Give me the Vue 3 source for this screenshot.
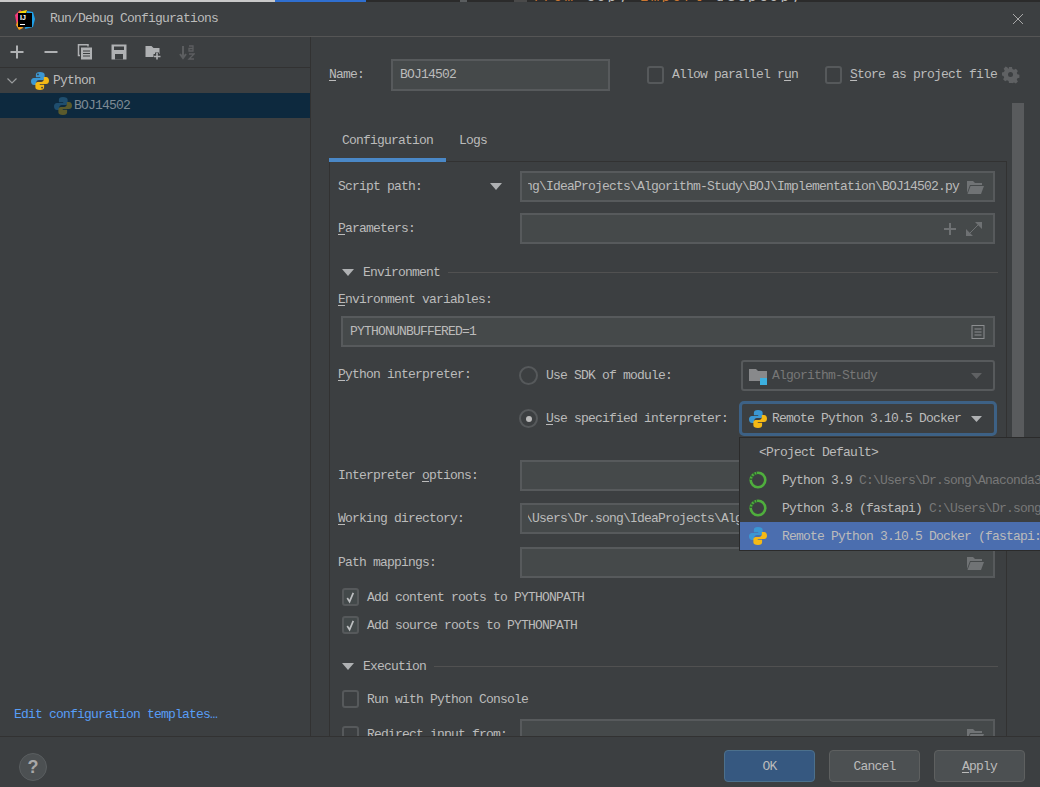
<script setup>
const tools = ['plus', 'minus', 'copy', 'save', 'folder', 'sort']
</script>

<template>
  <div class="dialog">
    <div class="strip">
      <div class="strip-light"></div>
      <div class="strip-blue"></div>
      <i class="strip-gap-a"></i>
      <i class="strip-tab-a"></i>
      <i class="strip-gap-b"></i>
      <i class="strip-tab-b"></i>
      <div class="strip-code"><span class="kw">from</span> copy <span class="kw">import</span> deepcopy</div>
    </div>
    <header class="title">
      <svg class="ij" width="20" height="20" viewBox="0 0 20 20">
        <path d="M0 5 L5 0 L9 3 L3 12 L2 16 Z" fill="#f5387a" />
        <path d="M1 15 L4 8 L8 18 L4 20 Z" fill="#f9a11b" />
        <path d="M3 2 L12 0 L10 6 Z" fill="#f5d90a" />
        <path d="M12 1 L18 2 L20 9 L18 17 L10 19 Z" fill="#1f9fe6" />
        <rect x="3" y="3" width="14" height="14" fill="#000" />
        <rect x="5" y="14" width="5" height="1" fill="#fff" />
        <text x="5" y="10" class="ij-text">IJ</text>
      </svg>
      <span class="title-text">Run/Debug Configurations</span>
      <svg class="close" width="12" height="12" viewBox="0 0 12 12"><path d="M1 1 L11 11 M11 1 L1 11" stroke="#a8a8a8" stroke-width="1" fill="none" /></svg>
    </header>
    <div class="body">
      <aside class="side">
        <div class="toolbar">
          <span v-for="t in tools" :key="t" class="tool">
            <svg width="16" height="16" viewBox="0 0 16 16">
              <path v-if="t === 'plus'" d="M1.5 8 H14.5 M8 1.5 V14.5" stroke="#afb1b3" stroke-width="2" fill="none" />
              <path v-else-if="t === 'minus'" d="M1.5 8 H14.5" stroke="#afb1b3" stroke-width="2" fill="none" />
              <g v-else-if="t === 'copy'" fill="none" stroke="#afb1b3">
                <path d="M3 11.5 H1.5 V0.8 H11 V2.5" stroke-width="1.5" />
                <rect x="4" y="3.5" width="11" height="12" fill="#afb1b3" stroke="none" />
                <path d="M6 7 H13 M6 9.5 H13 M6 12 H13" stroke="#3c3f41" stroke-width="1" />
              </g>
              <g v-else-if="t === 'save'">
                <path d="M0.5 0.5 H15.5 V15.5 H0.5 Z" fill="#afb1b3" />
                <rect x="3" y="2.5" width="10" height="3.5" fill="#3c3f41" />
                <rect x="4" y="10" width="8" height="5.5" fill="#3c3f41" />
              </g>
              <g v-else-if="t === 'folder'">
                <path d="M0.5 2 H6.5 L8.5 4 H14.5 V13 H0.5 Z" fill="#afb1b3" />
                <path d="M12 8.5 V15.5 M8.5 12 H15.5" stroke="#3c3f41" stroke-width="4" />
                <path d="M12 9 V15.5 M9 12.5 H15.5" stroke="#afb1b3" stroke-width="1.6" />
              </g>
              <g v-else fill="none" stroke="#5c5e60">
                <path d="M4 2 V13 M1 10 L4 14 L7 10" stroke-width="2" />
                <path d="M10 2 H14 V7 H10 V4.5 H14 M10 10 H15 L10 15 H15" stroke-width="1.3" />
              </g>
            </svg>
          </span>
        </div>
        <div class="tree-row">
          <svg class="chev" width="10" height="6" viewBox="0 0 10 6"><path d="M0.5 0.5 L5 5 L9.5 0.5" stroke="#9a9c9e" stroke-width="1.2" fill="none" /></svg>
          <svg class="py" width="18" height="18" viewBox="1 1 14 14">
            <path d="M8 1C5.6 1 4.8 1.9 4.8 3.100V5H8.200V5.600H3.300C1.900 5.600 1 6.700 1 8.200c0 1.600.9 2.900 2.300 2.900H5V9.300c0-1.200 1-2.100 2.200-2.100h2.600c1 0 1.800-.8 1.800-1.800V3.100C11.600 1.800 10.300 1 8 1z" fill="#3b97d3" />
            <path d="M8 15c2.400 0 3.200-.9 3.200-2.100V11H7.800v-.6h4.900c1.400 0 2.300-1.100 2.300-2.600 0-1.600-.9-2.900-2.300-2.900H11v1.800c0 1.200-1 2.100-2.200 2.100H6.200c-1 0-1.800.8-1.800 1.800v2.300C4.400 14.200 5.700 15 8 15z" fill="#f5b915" />
            <circle cx="6.400" cy="2.900" r=".7" fill="#3c3f41" /><circle cx="9.600" cy="13.100" r=".7" fill="#3c3f41" />
          </svg>
          <span>Python</span>
        </div>
        <div class="tree-row selected">
          <svg class="py-child" width="18" height="18" viewBox="1 1 14 14">
            <path d="M8 1C5.6 1 4.8 1.9 4.8 3.100V5H8.200V5.600H3.300C1.900 5.600 1 6.700 1 8.200c0 1.600.9 2.900 2.300 2.900H5V9.300c0-1.200 1-2.100 2.200-2.100h2.600c1 0 1.800-.8 1.800-1.800V3.100C11.600 1.800 10.300 1 8 1z" fill="#1f4e6e" />
            <path d="M8 15c2.400 0 3.200-.9 3.200-2.100V11H7.800v-.6h4.900c1.400 0 2.300-1.100 2.300-2.600 0-1.600-.9-2.900-2.300-2.900H11v1.800c0 1.200-1 2.100-2.200 2.100H6.200c-1 0-1.800.8-1.800 1.800v2.300C4.400 14.200 5.700 15 8 15z" fill="#5a5a2c" />
          </svg>
          <span>BOJ14502</span>
        </div>
        <a class="templates">Edit configuration templates…</a>
      </aside>
      <main class="main">
        <div class="name-row">
          <label class="name-label"><u>N</u>ame:</label>
          <div class="input name-input">BOJ14502</div>
          <span class="check-box first"></span><span class="check-text">Allow parallel r<u>u</u>n</span>
          <span class="check-box second"></span><span class="check-text"><u>S</u>tore as project file</span>
          <svg class="gear" width="18" height="18" viewBox="0 0 18 18">
            <path d="M7 1h3l.4 2 1.6.8 1.900-1 2 2.100-1.100 1.800.6 1.500 2 .5v3l-2 .5-.6 1.500 1.100 1.700-2 2.100-1.900-1-1.600.7L10 17H7l-.4-2-1.600-.7-1.800 1-2.100-2.100 1.100-1.700-.7-1.500L0 9.500v-3l2-.5.7-1.500-1.100-1.800 2.100-2.100 1.800 1L6.600 3z" fill="#5f6163" />
            <circle cx="8.500" cy="8.500" r="2.500" fill="#3c3f41" />
          </svg>
        </div>
        <div class="tabs">
          <span class="tab active">Configuration</span>
          <span class="tab">Logs</span>
        </div>
        <section class="panel">
          <div class="row r-script">
            <span class="label">Script path:</span>
            <svg class="combo-arrow" width="12" height="7" viewBox="0 0 12 7"><path d="M0 0H12L6 7Z" fill="#afb1b3" /></svg>
            <div class="input field path">
              <div class="path-clip"><span class="path-text">C:\Users\Dr.song\IdeaProjects\Algorithm-Study\BOJ\Implementation\BOJ14502.py</span></div>
              <svg class="folder-ic" width="18" height="14" viewBox="0 0 18 14"><path d="M1 1H7L9 3H16V5H4L1 13Z" fill="#707375" /><path d="M4.500 6H18L15 14H1.500Z" fill="#707375" /></svg>
            </div>
          </div>
          <div class="row r-params">
            <span class="label"><u>P</u>arameters:</span>
            <div class="input field end">
              <svg width="40" height="16" viewBox="4 0 40 16">
                <path d="M4 8H16M10 2V14" stroke="#6e7173" stroke-width="2" fill="none" />
                <path d="M27 15L40 2" stroke="#6e7173" stroke-width="1" fill="none" />
                <path d="M35 1H42V8ZM26 8V15H33Z" fill="#6e7173" />
              </svg>
            </div>
          </div>
          <div class="section s-env">
            <svg width="12" height="7" viewBox="0 0 12 7"><path d="M0 0H12L6 7Z" fill="#afb1b3" /></svg>
            <span>Environment</span>
            <i class="rule"></i>
          </div>
          <div class="plain r-envl"><u>E</u>nvironment variables:</div>
          <div class="input env-input">
            <span>PYTHONUNBUFFERED=1</span>
            <svg width="14" height="14" viewBox="0 0 14 14"><rect x="1" y="0.500" width="12" height="13" fill="none" stroke="#8c8e90" /><path d="M3.500 4H10.500M3.500 7H10.500M3.500 10H10.500" stroke="#8c8e90" /></svg>
          </div>
          <div class="row r-sdk">
            <span class="label py-label"><u>P</u>ython interpreter:</span>
            <span class="radio"></span><span class="radio-text sdk">Use SDK of module:</span>
            <div class="combo disabled">
              <svg width="18" height="18" viewBox="0 0 18 18"><path d="M0 2H7L9 4H18V14H0Z" fill="#88898b" /><rect x="11" y="11" width="7" height="7" fill="#3cb0e0" /></svg>
              <span>Algorithm-Study</span>
              <svg class="push" width="11" height="6" viewBox="0 0 11 6"><path d="M0 0H11L5.500 6Z" fill="#5f6163" /></svg>
            </div>
          </div>
          <div class="row r-spec">
            <span class="label"></span>
            <span class="radio on"><i></i></span><span class="radio-text spec"><u>U</u>se specified interpreter:</span>
            <div class="combo focus">
              <svg width="18" height="18" viewBox="1 1 14 14">
                <path d="M8 1C5.600 1 4.800 1.900 4.800 3.100V5H8.200V5.600H3.300C1.900 5.600 1 6.700 1 8.200c0 1.600.9 2.900 2.300 2.900H5V9.300c0-1.200 1-2.100 2.200-2.100h2.600c1 0 1.800-.8 1.800-1.800V3.100C11.600 1.800 10.300 1 8 1z" fill="#3b97d3" />
                <path d="M8 15c2.400 0 3.200-.9 3.200-2.100V11H7.800v-.6h4.900c1.400 0 2.300-1.100 2.300-2.600 0-1.600-.9-2.900-2.300-2.900H11v1.800c0 1.200-1 2.100-2.200 2.100H6.200c-1 0-1.800.8-1.800 1.800v2.300C4.400 14.200 5.700 15 8 15z" fill="#f5b915" />
              </svg>
              <span>Remote Python 3.10.5 Docker</span>
              <svg class="push" width="11" height="6" viewBox="0 0 11 6"><path d="M0 0H11L5.500 6Z" fill="#afb1b3" /></svg>
            </div>
          </div>
          <div class="row r-opts">
            <span class="label">Interpreter <u>o</u>ptions:</span>
            <div class="input field"></div>
          </div>
          <div class="row r-work">
            <span class="label"><u>W</u>orking directory:</span>
            <div class="input field path">
              <div class="path-clip"><span class="path-text">C:\Users\Dr.song\IdeaProjects\Algorithm-Study\BOJ\Implementation</span></div>
            </div>
          </div>
          <div class="row r-map">
            <span class="label">Path mappings:</span>
            <div class="input field end">
              <svg width="18" height="14" viewBox="0 0 18 14"><path d="M1 1H7L9 3H16V5H4L1 13Z" fill="#707375" /><path d="M4.500 6H18L15 14H1.500Z" fill="#707375" /></svg>
            </div>
          </div>
          <div class="check-row c1">
            <span class="check-box on"><svg width="13" height="13" viewBox="0 0 14 14"><path d="M3.500 7.500L6 11.500L10 2" stroke="#bdbfc1" stroke-width="1.800" fill="none" /></svg></span>
            <span class="check-label">Add content roots to PYTHONPATH</span>
          </div>
          <div class="check-row c2">
            <span class="check-box on"><svg width="13" height="13" viewBox="0 0 14 14"><path d="M3.500 7.500L6 11.500L10 2" stroke="#bdbfc1" stroke-width="1.800" fill="none" /></svg></span>
            <span class="check-label">Add source roots to PYTHONPATH</span>
          </div>
          <div class="section s-exec">
            <svg width="12" height="7" viewBox="0 0 12 7"><path d="M0 0H12L6 7Z" fill="#afb1b3" /></svg>
            <span>Execution</span>
            <i class="rule"></i>
          </div>
          <div class="check-row c3">
            <span class="check-box"></span>
            <span class="check-label">Run with Python Console</span>
          </div>
          <div class="row r-redir">
            <span class="label redir"><span class="check-box"></span><span>Redirect input from:</span></span>
            <div class="input field end">
              <svg width="18" height="14" viewBox="0 0 18 14"><path d="M1 1H7L9 3H16V5H4L1 13Z" fill="#707375" /><path d="M4.500 6H18L15 14H1.500Z" fill="#707375" /></svg>
            </div>
          </div>
        </section>
      </main>
    </div>
    <footer class="footer">
      <span class="help">?</span>
      <span class="btn primary">OK</span>
      <span class="btn">Cancel</span>
      <span class="btn"><u>A</u>pply</span>
    </footer>

    <div class="scrollbar"></div>
    <div class="popup">
      <div class="item default"><span>&lt;Project Default&gt;</span></div>
      <div class="item">
        <svg width="18" height="18" viewBox="0 0 18 18"><circle cx="9" cy="9" r="7.300" fill="none" stroke="#4fae3d" stroke-width="2.600" /><path d="M2 9A7 7 0 0 1 8 2" fill="none" stroke="#2f6b2f" stroke-width="2.600" stroke-dasharray="1.500 1.500" /></svg>
        <span>Python 3.9 <em>C:\Users\Dr.song\Anaconda3</em></span>
      </div>
      <div class="item">
        <svg width="18" height="18" viewBox="0 0 18 18"><circle cx="9" cy="9" r="7.300" fill="none" stroke="#4fae3d" stroke-width="2.600" /><path d="M2 9A7 7 0 0 1 8 2" fill="none" stroke="#2f6b2f" stroke-width="2.600" stroke-dasharray="1.500 1.500" /></svg>
        <span>Python 3.8 (fastapi) <em>C:\Users\Dr.song</em></span>
      </div>
      <div class="item sel">
        <svg width="18" height="18" viewBox="1 1 14 14">
          <path d="M8 1C5.600 1 4.800 1.900 4.800 3.100V5H8.200V5.600H3.300C1.900 5.600 1 6.700 1 8.200c0 1.600.9 2.900 2.300 2.900H5V9.300c0-1.200 1-2.100 2.200-2.100h2.600c1 0 1.800-.8 1.800-1.800V3.100C11.600 1.800 10.300 1 8 1z" fill="#3b97d3" />
          <path d="M8 15c2.400 0 3.200-.9 3.200-2.100V11H7.800v-.6h4.900c1.400 0 2.300-1.100 2.300-2.600 0-1.600-.9-2.900-2.300-2.900H11v1.800c0 1.200-1 2.100-2.200 2.100H6.200c-1 0-1.800.8-1.800 1.800v2.300C4.400 14.200 5.700 15 8 15z" fill="#f5b915" />
        </svg>
        <span>Remote Python 3.10.5 Docker (fastapi:</span>
      </div>
    </div>
  </div>
</template>

<style>
html, body { margin: 0; background: #3c3f41; }
</style>

<style scoped>
.dialog {
  position: relative;
  width: 1040px;
  height: 787px;
  overflow: hidden;
  display: flex;
  flex-direction: column;
  background: #3c3f41;
  color: #bbbbbb;
  font-family: "Liberation Mono", "DejaVu Sans Mono", monospace;
  font-size: 13px;
  letter-spacing: -0.8px;
  line-height: 16px;
}
u { text-underline-offset: 2px; }
.strip { height: 2px; display: flex; background: #2b2b2b; overflow: hidden; flex: none; }
.strip-light { width: 275px; background: #c9c9c9; flex: none; }
.strip-blue { width: 91px; background: #2f6fd0; flex: none; }
.strip-gap-a { width: 94px; flex: none; }
.strip-tab-a { width: 7px; background: #5a5d5f; flex: none; }
.strip-gap-b { width: 47px; flex: none; }
.strip-tab-b { width: 13px; background: #4a4a4a; flex: none; }
.strip-code { margin: -12px 0 0 5px; color: #bbbbbb; white-space: nowrap; font-family: "DejaVu Sans Mono", monospace; font-size: 14px; letter-spacing: 2.37px; }
.kw { color: #cc7832; }
.title { height: 34px; flex: none; display: flex; align-items: center; border-bottom: 1px solid #555555; padding: 0 16px 0 15px; }
.ij { flex: none; margin-top: 1px; }
.ij-text { font-size: 7px; font-weight: 700; fill: #fff; letter-spacing: 0; font-family: "Liberation Sans", sans-serif; }
.title-text { margin-left: 15px; flex: 1; }
.close { flex: none; }
.body { flex: none; height: 699px; display: flex; overflow: hidden; }
.side { width: 310px; flex: none; border-right: 1px solid #323232; display: flex; flex-direction: column; }
.toolbar { height: 30px; flex: none; display: flex; align-items: center; padding-left: 9px; gap: 18px; border-bottom: 1px solid #323232; }
.tool { width: 16px; height: 16px; display: block; }
.tool svg { display: block; }
.tree-row { height: 25px; flex: none; display: flex; align-items: center; }
.chev { margin-left: 7px; flex: none; }
.py { margin-left: 14px; margin-right: 4px; flex: none; }
.py-child { margin-left: 54px; margin-right: 2px; flex: none; }
.selected { background: #0d293e; color: #7d8a94; }
.templates { margin-top: auto; margin-bottom: 13px; margin-left: 14px; color: #589df6; }
.main { flex: 1; min-width: 0; padding-left: 18px; padding-right: 33px; display: flex; flex-direction: column; }
.name-row { display: flex; align-items: center; height: 32px; margin-top: 22px; flex: none; position: relative; }
.name-label { width: 62px; flex: none; }
.input { box-sizing: border-box; background: #45494a; border: 2px solid #575a5c; }
.name-input { width: 219px; height: 32px; padding-left: 7px; line-height: 28px; flex: none; }
.check-box { box-sizing: border-box; width: 17px; height: 18px; border: 2px solid #56595b; border-radius: 3px; display: inline-flex; align-items: center; justify-content: center; flex: none; background: transparent; }
.check-box.first { margin-left: 37px; }
.check-box.second { margin-left: 27px; }
.check-text { margin-left: 8px; white-space: nowrap; }
.gear { position: absolute; left: 673px; top: 7px; }
.tabs { display: flex; height: 39px; margin-top: 32px; flex: none; position: relative; z-index: 1; }
.tab { padding: 0 13px; height: 35px; line-height: 35px; box-sizing: content-box; }
.tab.active { border-bottom: 4px solid #4a88c7; }
.panel { margin-top: -1px; flex: 1; border: 1px solid #323232; border-bottom: 0; padding: 0 11px 0 8px; min-height: 0; overflow: hidden; display: flex; flex-direction: column; }
.row { display: flex; align-items: center; flex: none; height: 31px; }
.label { width: 182px; flex: none; white-space: nowrap; }
.py-label { margin-bottom: 2px; }
.field { flex: 1; min-width: 0; height: 31px; display: flex; align-items: center; }
.end { justify-content: flex-end; padding-right: 9px; }
.path { padding: 0 9px 0 6px; position: relative; }
.path-clip { flex: 1; min-width: 0; overflow: hidden; display: flex; justify-content: flex-end; padding-top: 1px; }
.path-text { white-space: nowrap; flex: none; margin-right: 25px; }
.folder-ic { position: absolute; right: 9px; top: 7px; }
.combo-arrow { margin-left: -30px; margin-right: 18px; flex: none; }
.r-script { margin-top: 9px; }
.r-params { margin-top: 11px; }
.section { flex: none; display: flex; align-items: center; height: 16px; padding-left: 4px; margin-right: -3px; }
.section span { margin: 0 8px 0 9px; padding-top: 2px; white-space: nowrap; }
.rule { flex: 1; height: 1px; background: #515151; }
.s-env { margin-top: 20px; }
.plain { flex: none; height: 16px; }
.r-envl { margin-top: 12px; }
.env-input { flex: none; margin: 8px 0 0 3px; height: 31px; padding: 0 8px 0 7px; display: flex; align-items: center; justify-content: space-between; }
.r-sdk { margin-top: 13px; }
.r-spec { margin-top: 12px; }
.radio { box-sizing: border-box; width: 19px; height: 19px; margin-left: -1px; border: 2px solid #56595b; border-radius: 50%; flex: none; display: flex; align-items: center; justify-content: center; }
.radio i { width: 6px; height: 6px; border-radius: 50%; background: #bbbbbb; }
.radio-text { margin-left: 8px; width: 195px; flex: none; white-space: nowrap; }
.combo { box-sizing: border-box; flex: 1; height: 31px; border: 2px solid #575a5c; border-radius: 3px; display: flex; align-items: center; padding: 0 11px 0 6px; gap: 5px; min-width: 0; white-space: nowrap; }
.combo svg { flex: none; }
.combo.disabled { color: #777777; }
.combo.focus { border: 2px solid #3c3f41; outline: 3px solid #3d6185; outline-offset: -1px; }
.push { margin-left: auto; flex: none; }
.r-opts { margin-top: 26px; }
.r-work { margin-top: 12px; }
.r-map { margin-top: 13px; }
.check-row { flex: none; height: 18px; display: flex; align-items: center; gap: 8px; padding-left: 4px; white-space: nowrap; }
.check-label { padding-top: 2px; }
.check-box.on { background: #43494a; }
.c1 { margin-top: 10px; }
.c2 { margin-top: 10px; }
.s-exec { margin-top: 24px; }
.c3 { margin-top: 16px; }
.r-redir { margin-top: 11px; }
.redir { display: flex; align-items: center; gap: 8px; padding-left: 4px; width: 178px; }
.footer { flex: 1; border-top: 1px solid #323232; display: flex; align-items: center; padding: 0 15px 0 19px; gap: 14px; }
.help { width: 28px; height: 28px; border-radius: 50%; background: #4c5052; border: 1px solid #5a5e60; box-sizing: border-box; text-align: center; font: 700 18px/26px "Liberation Sans", sans-serif; letter-spacing: 0; color: #a8a8a8; margin-right: auto; margin-top: 9px; }
.btn { box-sizing: border-box; width: 91px; height: 32px; padding-top: 2px; border: 1px solid #5e6060; border-radius: 4px; background: #4c5052; display: flex; align-items: center; justify-content: center; margin-top: 8px; }
.btn.primary { background: #365880; border-color: #4c708c; }
.scrollbar { position: absolute; left: 1012px; top: 103px; width: 12px; height: 400px; background: #595b5d; }
.popup { position: absolute; left: 739px; top: 437px; width: 320px; border: 1px solid #2b2b2b; background: #3c3f41; }
.item { height: 28px; display: flex; align-items: center; padding-left: 9px; white-space: nowrap; gap: 15px; }
.item svg { flex: none; }
.item span { flex: none; padding-top: 2px; }
.item.default { padding-left: 19px; }
.item em { font-style: normal; color: #787878; }
.item.sel { background: #4b6eaf; }
</style>
